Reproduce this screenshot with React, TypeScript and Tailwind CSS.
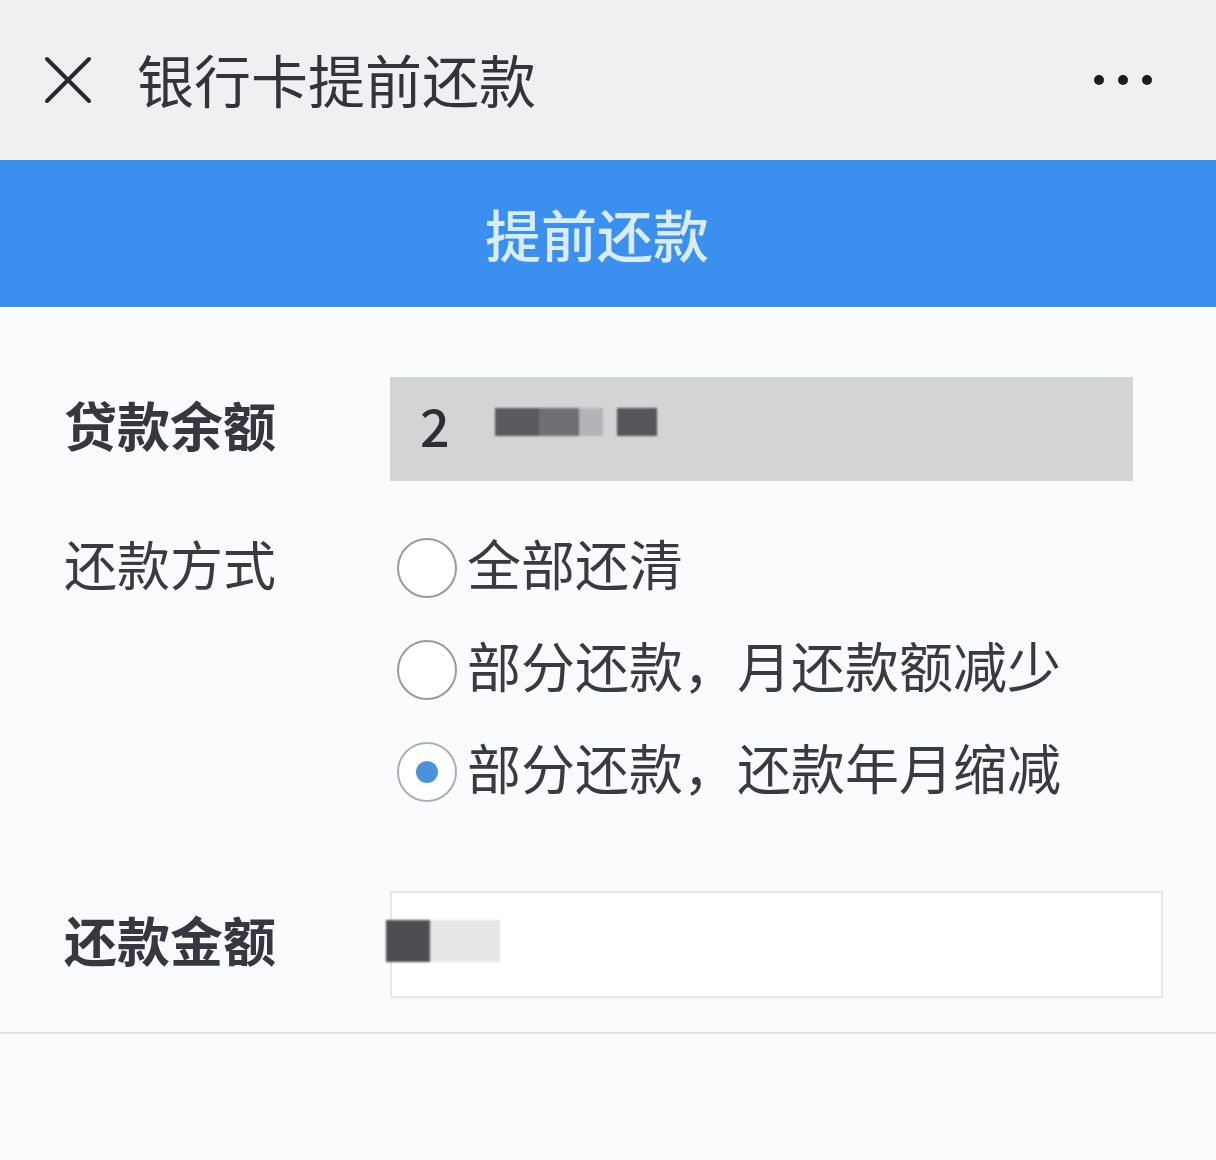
import React from "react";

const font = { fontFamily: '"Noto Sans CJK SC", "Noto Sans", sans-serif' };

function Radio({ checked, label }: { checked?: boolean; label: string }) {
  return (
    <div className="flex h-[102px] items-center">
      <div
        className={
          "flex h-[60px] w-[60px] shrink-0 items-center justify-center rounded-full border-2 bg-white " +
          (checked ? "border-[#a9b0b8]" : "border-[#9a9a9c]")
        }
      >
        {checked && <div className="h-[22px] w-[22px] rounded-full bg-[#4a92dc]" />}
      </div>
      <span className="ml-[10px] pb-[10px] text-[54px] leading-none text-[#3d3942]">{label}</span>
    </div>
  );
}

export default function App() {
  return (
    <div style={font} className="flex h-[1160px] w-[1216px] flex-col overflow-hidden bg-[#fafbfd]">
      {/* header */}
      <div className="flex h-[160px] shrink-0 items-center bg-[#f0f0f2] pl-[44px] pr-[64px]">
        <svg width="48" height="48" viewBox="0 0 48 48" className="shrink-0">
          <path d="M3 3 L45 45 M45 3 L3 45" stroke="#2a272e" strokeWidth="4" strokeLinecap="round" />
        </svg>
        <span className="ml-[45px] pb-[4px] text-[57px] leading-none text-[#35323a]">银行卡提前还款</span>
        <div className="ml-auto flex items-center gap-[14px]">
          <div className="h-[10px] w-[10px] rounded-full bg-[#1d1a22]" />
          <div className="h-[10px] w-[10px] rounded-full bg-[#1d1a22]" />
          <div className="h-[10px] w-[10px] rounded-full bg-[#1d1a22]" />
        </div>
      </div>

      {/* blue bar */}
      <div className="flex h-[147px] shrink-0 items-center justify-center bg-[#3b90ef]">
        <span className="ml-[-22px] pb-[2px] text-[56px] font-medium leading-none text-[#d9ecfb]">提前还款</span>
      </div>

      {/* form */}
      <div className="mt-[70px] flex h-[104px] items-center">
        <div className="w-[390px] pb-[10px] pl-[64px] text-[53px] font-bold leading-none text-[#3a363f]">贷款余额</div>
        <div className="flex h-[104px] w-[743px] items-center bg-[#d4d4d6] pl-[30px]">
          <span className="pb-[8px] text-[52px] font-medium leading-none text-[#2f2f33]">2</span>
          <div className="mb-[14px] ml-[45px] flex items-start blur-[1px]">
            <div className="h-[28px] w-[44px] bg-[#5a5a5e]" />
            <div className="h-[28px] w-[40px] bg-[#707074]" />
            <div className="h-[28px] w-[24px] bg-[#b4b4b8]" />
            <div className="ml-[14px] h-[28px] w-[40px] bg-[#55555a]" />
          </div>
        </div>
      </div>

      <div className="mt-[36px] flex">
        <div className="flex h-[102px] w-[397px] items-center pb-[10px] pl-[64px] text-[53px] leading-none text-[#3d3942]">
          还款方式
        </div>
        <div className="flex flex-col">
          <Radio label="全部还清" />
          <Radio label="部分还款，月还款额减少" />
          <Radio checked label="部分还款，还款年月缩减" />
        </div>
      </div>

      <div className="mt-[68px] flex h-[107px] items-center">
        <div className="w-[390px] pb-[10px] pl-[64px] text-[53px] font-bold leading-none text-[#3a363f]">还款金额</div>
        <div className="flex h-[107px] w-[773px] items-center border-2 border-[#e6e8ec] bg-white">
          <div className="mb-[8px] ml-[-6px] flex blur-[1px]">
            <div className="h-[42px] w-[44px] bg-[#4e4d52]" />
            <div className="h-[42px] w-[70px] bg-[#e6e6e9]" />
          </div>
        </div>
      </div>

      <div className="mt-[34px] h-[2px] w-full bg-[#dfe1e5]" />
      <div className="flex-1 bg-[#fbfcfe]" />
    </div>
  );
}
